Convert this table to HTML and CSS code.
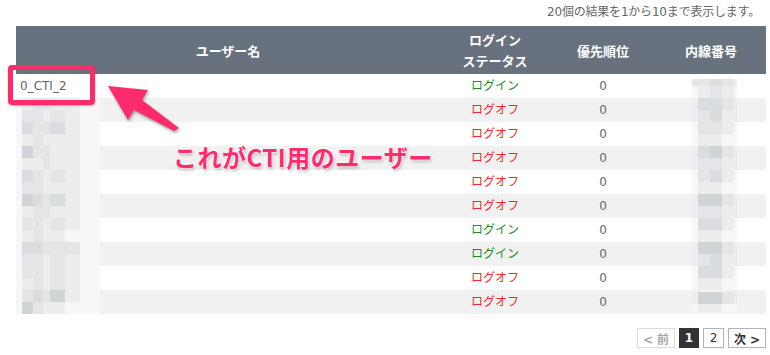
FILE: index.html
```html
<!DOCTYPE html>
<html lang="ja">
<head>
<meta charset="utf-8">
<title>ユーザー一覧</title>
<link rel="stylesheet" href="styles.css">
</head>
<body>
<div class="page">
  <div class="content">
    <div class="summary">20個の結果を1から10まで表示します。</div>
    <table class="grid">
      <colgroup>
        <col class="c-name"><col class="c-status"><col class="c-prio"><col class="c-ext">
      </colgroup>
      <thead>
        <tr>
          <th>ユーザー名</th>
          <th>ログイン<br>ステータス</th>
          <th>優先順位</th>
          <th>内線番号</th>
        </tr>
      </thead>
      <tbody>
        <tr>
          <td class="name">0_CTI_2</td>
          <td class="on">ログイン</td>
          <td>0</td>
          <td class="ext"><div class="m4 first"><div class="strip"><span class="t2"></span><span class="t2"></span><span class="t3"></span><span class="t2"></span><span class="t1"></span></div><div class="strip"><span class="t0"></span><span class="t1"></span><span class="t2"></span><span class="t1"></span><span class="t0"></span></div></div></td>
        </tr>
        <tr>
          <td class="name"><div class="m1"><div class="strip"><span class="t0"></span><span class="t1"></span><span class="t2"></span><span class="t2"></span><span class="t1"></span><span class="t1"></span><span class="t0"></span></div><div class="strip"><span class="t0"></span><span class="t2"></span><span class="t2"></span><span class="t1"></span><span class="t2"></span><span class="t1"></span><span class="t0"></span></div></div></td>
          <td class="off">ログオフ</td>
          <td>0</td>
          <td class="ext"><div class="m4"><div class="strip"><span class="t1"></span><span class="t3"></span><span class="t3"></span><span class="t2"></span><span class="t1"></span></div><div class="strip"><span class="t1"></span><span class="t2"></span><span class="t3"></span><span class="t1"></span><span class="t1"></span></div></div></td>
        </tr>
        <tr>
          <td class="name"><div class="m1"><div class="strip"><span class="t0"></span><span class="t3"></span><span class="t2"></span><span class="t2"></span><span class="t3"></span><span class="t1"></span><span class="t0"></span></div><div class="strip"><span class="t0"></span><span class="t1"></span><span class="t2"></span><span class="t1"></span><span class="t1"></span><span class="t1"></span><span class="t0"></span></div></div></td>
          <td class="off">ログオフ</td>
          <td>0</td>
          <td class="ext"><div class="m4"><div class="strip"><span class="t0"></span><span class="t2"></span><span class="t2"></span><span class="t1"></span><span class="t0"></span></div><div class="strip"><span class="t0"></span><span class="t1"></span><span class="t1"></span><span class="t0"></span><span class="t0"></span></div></div></td>
        </tr>
        <tr>
          <td class="name"><div class="m1"><div class="strip"><span class="t0"></span><span class="t4"></span><span class="t2"></span><span class="t2"></span><span class="t1"></span><span class="t1"></span><span class="t0"></span></div><div class="strip"><span class="t0"></span><span class="t1"></span><span class="t1"></span><span class="t2"></span><span class="t1"></span><span class="t1"></span><span class="t0"></span></div></div></td>
          <td class="off">ログオフ</td>
          <td>0</td>
          <td class="ext"><div class="m4"><div class="strip"><span class="t1"></span><span class="t3"></span><span class="t4"></span><span class="t2"></span><span class="t1"></span></div><div class="strip"><span class="t1"></span><span class="t2"></span><span class="t2"></span><span class="t1"></span><span class="t1"></span></div></div></td>
        </tr>
        <tr>
          <td class="name"><div class="m1"><div class="strip"><span class="t0"></span><span class="t3"></span><span class="t2"></span><span class="t1"></span><span class="t2"></span><span class="t1"></span><span class="t0"></span></div><div class="strip"><span class="t0"></span><span class="t2"></span><span class="t2"></span><span class="t1"></span><span class="t1"></span><span class="t1"></span><span class="t0"></span></div></div></td>
          <td class="off">ログオフ</td>
          <td>0</td>
          <td class="ext"><div class="m4"><div class="strip"><span class="t0"></span><span class="t2"></span><span class="t3"></span><span class="t1"></span><span class="t0"></span></div><div class="strip"><span class="t0"></span><span class="t1"></span><span class="t1"></span><span class="t0"></span><span class="t0"></span></div></div></td>
        </tr>
        <tr>
          <td class="name"><div class="m1"><div class="strip"><span class="t0"></span><span class="t4"></span><span class="t3"></span><span class="t2"></span><span class="t3"></span><span class="t1"></span><span class="t0"></span></div><div class="strip"><span class="t0"></span><span class="t1"></span><span class="t2"></span><span class="t2"></span><span class="t1"></span><span class="t1"></span><span class="t0"></span></div></div></td>
          <td class="off">ログオフ</td>
          <td>0</td>
          <td class="ext"><div class="m4"><div class="strip"><span class="t1"></span><span class="t4"></span><span class="t4"></span><span class="t2"></span><span class="t1"></span></div><div class="strip"><span class="t1"></span><span class="t2"></span><span class="t2"></span><span class="t1"></span><span class="t1"></span></div></div></td>
        </tr>
        <tr>
          <td class="name"><div class="m1"><div class="strip"><span class="t0"></span><span class="t2"></span><span class="t2"></span><span class="t1"></span><span class="t2"></span><span class="t1"></span><span class="t0"></span></div><div class="strip"><span class="t0"></span><span class="t1"></span><span class="t2"></span><span class="t1"></span><span class="t1"></span><span class="t0"></span><span class="t0"></span></div></div></td>
          <td class="on">ログイン</td>
          <td>0</td>
          <td class="ext"><div class="m4"><div class="strip"><span class="t0"></span><span class="t3"></span><span class="t3"></span><span class="t1"></span><span class="t0"></span></div><div class="strip"><span class="t0"></span><span class="t1"></span><span class="t1"></span><span class="t0"></span><span class="t0"></span></div></div></td>
        </tr>
        <tr>
          <td class="name"><div class="m1"><div class="strip"><span class="t0"></span><span class="t3"></span><span class="t3"></span><span class="t2"></span><span class="t2"></span><span class="t2"></span><span class="t0"></span></div><div class="strip"><span class="t0"></span><span class="t2"></span><span class="t2"></span><span class="t1"></span><span class="t2"></span><span class="t1"></span><span class="t0"></span></div></div></td>
          <td class="on">ログイン</td>
          <td>0</td>
          <td class="ext"><div class="m4"><div class="strip"><span class="t1"></span><span class="t4"></span><span class="t4"></span><span class="t2"></span><span class="t1"></span></div><div class="strip"><span class="t1"></span><span class="t2"></span><span class="t3"></span><span class="t1"></span><span class="t1"></span></div></div></td>
        </tr>
        <tr>
          <td class="name"><div class="m1"><div class="strip"><span class="t0"></span><span class="t2"></span><span class="t2"></span><span class="t1"></span><span class="t2"></span><span class="t1"></span><span class="t0"></span></div><div class="strip"><span class="t0"></span><span class="t1"></span><span class="t2"></span><span class="t1"></span><span class="t2"></span><span class="t1"></span><span class="t0"></span></div></div></td>
          <td class="off">ログオフ</td>
          <td>0</td>
          <td class="ext"><div class="m4"><div class="strip"><span class="t0"></span><span class="t3"></span><span class="t3"></span><span class="t1"></span><span class="t0"></span></div><div class="strip"><span class="t0"></span><span class="t1"></span><span class="t1"></span><span class="t0"></span><span class="t0"></span></div></div></td>
        </tr>
        <tr>
          <td class="name"><div class="m1"><div class="strip"><span class="t0"></span><span class="t2"></span><span class="t3"></span><span class="t2"></span><span class="t4"></span><span class="t1"></span><span class="t0"></span></div><div class="strip"><span class="t0"></span><span class="t4"></span><span class="t2"></span><span class="t1"></span><span class="t1"></span><span class="t0"></span><span class="t0"></span></div></div></td>
          <td class="off">ログオフ</td>
          <td>0</td>
          <td class="ext"><div class="m4 last"><div class="strip"><span class="t1"></span><span class="t4"></span><span class="t4"></span><span class="t2"></span><span class="t1"></span></div><div class="strip"><span class="t0"></span><span class="t1"></span><span class="t1"></span><span class="t0"></span><span class="t0"></span></div></div></td>
        </tr>
      </tbody>
    </table>
    <nav class="pager">
      <span class="pg prev">&lt; 前</span>
      <span class="pg cur">1</span>
      <span class="pg num">2</span>
      <span class="pg next">次 &gt;</span>
    </nav>
  </div>

  <div class="callout"></div>
  <svg class="arrow" width="90" height="60" viewBox="0 0 90 60" aria-hidden="true">
    <polygon points="8,6 48,10 42,20 79,48 74,51 34,30 28,40" fill="#ff2b6d"/>
  </svg>
  <div class="caption">これがCTI用のユーザー</div>
</div>
</body>
</html>
```
FILE: styles.css
```css
* { box-sizing: border-box; }

body {
  margin: 0;
  background: #fff;
  color: #666;
  font-family: "DejaVu Sans", "Noto Sans CJK JP", sans-serif;
  font-size: 12px;
}

.page {
  position: relative;
  width: 770px;
  height: 355px;
  overflow: hidden;
}

.content {
  padding: 0 4px 0 16px;
}

.summary {
  height: 26px;
  line-height: 24px;
  text-align: right;
  padding-right: 6px;
  color: #666;
  letter-spacing: -0.2px;
}

.grid {
  width: 750px;
  border-collapse: collapse;
  table-layout: fixed;
}

.c-name { width: 424px; }
.c-status { width: 110px; }
.c-prio { width: 106px; }
.c-ext { width: 110px; }

.grid th {
  height: 48px;
  padding: 0;
  background: #68727e;
  color: #fff;
  font-family: "Noto Sans CJK JP", sans-serif;
  font-weight: 700;
  font-size: 13px;
  line-height: 21px;
  text-align: center;
}

.grid td {
  height: 24px;
  padding: 0;
  line-height: 24px;
  text-align: center;
  color: #666;
  vertical-align: middle;
}

.grid tbody tr:nth-child(even) td {
  background: #f1f1f1;
}

.grid td.name {
  text-align: left;
  padding-left: 4px;
}

.grid td.on { color: #1e8c1e; }
.grid td.off { color: #f42a2a; }

.grid td.ext { padding-left: 7px; }

/* pixelated (masked) content */
.m1 {
  width: 84px;
  margin-left: -4px;
  display: flex;
  flex-direction: column;
}

.m4 {
  width: 45px;
  margin: 0 auto;
  display: flex;
  flex-direction: column;
}

.m4.first { margin-top: 5px; }
.m4.first .strip { height: 7px; }
.m4.first .strip + .strip { height: 12px; }
.m4.last .strip + .strip { height: 8px; }

.strip {
  display: flex;
  height: 12px;
}

.strip span { display: block; height: 100%; }

.m1 .strip span:nth-child(1) { width: 6px; }
.m1 .strip span:nth-child(2) { width: 11px; }
.m1 .strip span:nth-child(3) { width: 10px; }
.m1 .strip span:nth-child(4) { width: 7px; }
.m1 .strip span:nth-child(5) { width: 15px; }
.m1 .strip span:nth-child(6) { width: 15px; }
.m1 .strip span:nth-child(7) { width: 20px; }

.m4 .strip span:nth-child(1) { width: 6px; }
.m4 .strip span:nth-child(2) { width: 12px; }
.m4 .strip span:nth-child(3) { width: 12px; }
.m4 .strip span:nth-child(4) { width: 12px; }
.m4 .strip span:nth-child(5) { width: 3px; }

.t0 { background: #f6f7f7; }
.t1 { background: #eceeee; }
.t2 { background: #e3e5e6; }
.t3 { background: #dadddf; }
.t4 { background: #d0d4d6; }

/* pagination */
.pager {
  display: flex;
  justify-content: flex-end;
  gap: 4px;
  margin-top: 14px;
}

.pg {
  height: 20px;
  display: flex;
  align-items: center;
  justify-content: center;
  border: 1px solid #a9b5c1;
  color: #333;
  font-size: 12px;
  font-family: "DejaVu Sans", "Noto Sans CJK JP", sans-serif;
}

.pg.prev {
  width: 38px;
  border-color: #dcdcdc;
  color: #a8a8a8;
  font-weight: 700;
}

.pg.cur {
  width: 20px;
  background: #333;
  border-color: #333;
  color: #fff;
  font-weight: 700;
}

.pg.num { width: 21px; }

.pg.next {
  width: 38px;
  font-weight: 700;
}

/* annotation overlay */
.callout {
  position: absolute;
  left: 8px;
  top: 65px;
  width: 87px;
  height: 40px;
  border: 5px solid #ff2b6d;
  border-radius: 4px;
  box-shadow: 0 1px 2px rgba(0, 0, 0, 0.25);
}

.arrow {
  position: absolute;
  left: 100px;
  top: 80px;
  filter: drop-shadow(1px 2px 1.5px rgba(0, 0, 0, 0.35));
}

.caption {
  position: absolute;
  left: 173px;
  top: 142px;
  font-family: "Noto Sans CJK JP", sans-serif;
  font-weight: 700;
  font-size: 24px;
  line-height: 30px;
  letter-spacing: 0.5px;
  color: #ff2b6d;
  white-space: nowrap;
  text-shadow:
    0 0 2px #fff, 0 0 2px #fff, 0 0 3px #fff,
    1px 2px 3px rgba(0, 0, 0, 0.3);
}
```
